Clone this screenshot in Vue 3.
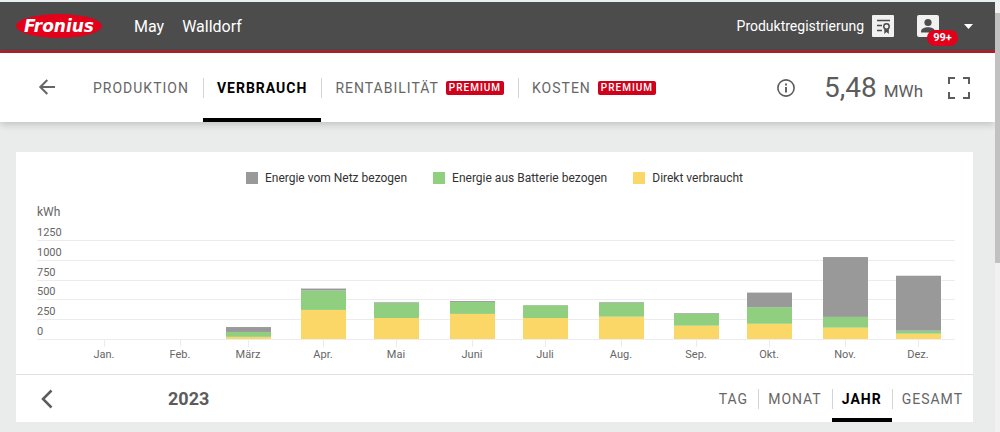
<script setup>
import { ref } from 'vue'

const views = [
  { id: 'production', label: 'PRODUKTION', premium: false },
  { id: 'consumption', label: 'VERBRAUCH', premium: false },
  { id: 'earnings', label: 'RENTABILITÄT', premium: true },
  { id: 'costs', label: 'KOSTEN', premium: true },
]
const activeView = ref('consumption')

const ranges = ['TAG', 'MONAT', 'JAHR', 'GESAMT']
const activeRange = ref('JAHR')

const legend = [
  { key: 'grid', label: 'Energie vom Netz bezogen' },
  { key: 'battery', label: 'Energie aus Batterie bezogen' },
  { key: 'direct', label: 'Direkt verbraucht' },
]

// Values in kWh; "day" is the day of the year on which the month starts.
const months = [
  { label: 'Jan.', day: 0, direct: 0, battery: 0, grid: 0 },
  { label: 'Feb.', day: 31, direct: 0, battery: 0, grid: 0 },
  { label: 'März', day: 59, direct: 27, battery: 62, grid: 62 },
  { label: 'Apr.', day: 90, direct: 367, battery: 245, grid: 25 },
  { label: 'Mai', day: 120, direct: 265, battery: 194, grid: 7 },
  { label: 'Juni', day: 151, direct: 317, battery: 150, grid: 12 },
  { label: 'Juli', day: 181, direct: 265, battery: 160, grid: 4 },
  { label: 'Aug.', day: 212, direct: 282, battery: 176, grid: 8 },
  { label: 'Sep.', day: 243, direct: 168, battery: 152, grid: 8 },
  { label: 'Okt.', day: 273, direct: 192, battery: 210, grid: 184 },
  { label: 'Nov.', day: 304, direct: 143, battery: 136, grid: 756 },
  { label: 'Dez.', day: 334, direct: 67, battery: 38, grid: 694 },
]

const baseY = 139
const barWidth = 45
const scale = 99 / 1250
const yOf = (kwh) => baseY - kwh * scale
const levels = [1250, 1000, 750, 500, 250, 0]

const columns = months.map((m) => {
  const x = Math.round(67 + m.day * 2.437)
  let sum = 0
  const parts = ['direct', 'battery', 'grid'].map((key) => {
    sum += m[key]
    return { key, y: yOf(sum), height: m[key] * scale }
  })
  return { label: m.label, x, parts }
})
</script>

<template>
  <div class="shell">
    <div class="page">
      <header class="topbar">
        <a class="logo" href="#" aria-label="Fronius">
          <svg width="88" height="26" viewBox="0 0 88 26">
            <ellipse cx="44" cy="13" rx="43" ry="12" fill="#e2001a" />
            <text x="44" y="19" text-anchor="middle" class="logo-text">Fronius</text>
          </svg>
        </a>
        <span class="system">May</span>
        <span class="system">Walldorf</span>
        <a class="register" href="#">
          Produktregistrierung
          <svg width="22" height="22" viewBox="0 0 22 22">
            <rect width="22" height="22" rx="1" fill="#f1f1f1" />
            <path d="M5 5.500H18M5 10.500H10M5 15.500H10" stroke="#4c4c4c" stroke-width="1.400" />
            <circle cx="14.500" cy="11.500" r="2.700" fill="none" stroke="#4c4c4c" stroke-width="1.500" />
            <path d="M12.300 13.500V19L14.500 17L16.800 19V13.500L14.500 15Z" fill="#4c4c4c" />
          </svg>
        </a>
        <button class="account" type="button" aria-label="Konto, 99+ Meldungen">
          <span class="avatar">
            <svg width="22" height="22" viewBox="0 0 22 22">
              <rect width="22" height="22" rx="2" fill="#f1f1f1" />
              <circle cx="11" cy="7.500" r="3.600" fill="#4c4c4c" />
              <path d="M4 17.500V16.500C4 13.500 8 12.300 11 12.300S18 13.500 18 16.500V17.500Z" fill="#4c4c4c" />
            </svg>
            <span class="count">99+</span>
          </span>
          <svg width="9" height="5" viewBox="0 0 9 5"><path d="M0 0H9L4.500 5Z" fill="#fff" /></svg>
        </button>
      </header>

      <nav class="subbar">
        <button class="back" type="button" aria-label="Zurück">
          <svg width="18" height="18" viewBox="0 0 18 18">
            <path d="M17 8H2.500M9.300 1L2.300 8L9.300 15" fill="none" stroke="#666" stroke-width="2" />
          </svg>
        </button>
        <div class="tabs views">
          <button
            v-for="v in views"
            :key="v.id"
            type="button"
            class="tab"
            :class="{ active: v.id === activeView }"
            @click="activeView = v.id"
          >
            {{ v.label }}<span v-if="v.premium" class="premium">PREMIUM</span>
          </button>
        </div>
        <button class="icon info" type="button" aria-label="Information">
          <svg width="18" height="18" viewBox="0 0 18 18">
            <circle cx="9" cy="9" r="8.100" fill="none" stroke="#5c5c5c" stroke-width="1.600" />
            <path d="M9 8V13.500M9 4.500V6.500" stroke="#5c5c5c" stroke-width="1.900" />
          </svg>
        </button>
        <div class="total">5,48 <span class="unit">MWh</span></div>
        <button class="icon full" type="button" aria-label="Vollbild">
          <svg width="24" height="24" viewBox="0 0 24 24">
            <path d="M2 8V2H8M16 2H22V8M22 16V22H16M8 22H2V16" fill="none" stroke="#5c5c5c" stroke-width="2" />
          </svg>
        </button>
      </nav>

      <main class="card">
        <ul class="legend">
          <li v-for="l in legend" :key="l.key"><i :class="l.key"></i>{{ l.label }}</li>
        </ul>

        <svg class="chart" viewBox="0 0 918 174" role="img" aria-label="Verbrauch in kWh pro Monat">
          <text x="0" y="16" class="axis-title">kWh</text>
          <g v-for="l in levels" :key="l">
            <rect x="0" :y="Math.round(yOf(l))" width="918" height="1" class="line" />
            <text x="0" :y="Math.round(yOf(l)) - 4" class="label">{{ l }}</text>
          </g>
          <g v-for="c in columns" :key="c.label">
            <rect :x="c.x" :y="baseY" width="1" height="8" class="line" />
            <rect
              v-for="p in c.parts"
              :key="p.key"
              :x="c.x - 22"
              :y="p.y"
              :width="barWidth"
              :height="p.height"
              :class="p.key"
            />
            <text :x="c.x" y="158" text-anchor="middle" class="label">{{ c.label }}</text>
          </g>
        </svg>

        <footer class="period">
          <button class="prev" type="button" aria-label="Vorheriges Jahr">
            <svg width="12" height="20" viewBox="0 0 12 20">
              <path d="M10.500 1.500L2 10L10.500 18.500" fill="none" stroke="#5c5c5c" stroke-width="2.500" />
            </svg>
          </button>
          <strong class="year">2023</strong>
          <div class="tabs ranges">
            <button
              v-for="r in ranges"
              :key="r"
              type="button"
              class="tab"
              :class="{ active: r === activeRange }"
              @click="activeRange = r"
            >
              {{ r }}
            </button>
          </div>
        </footer>
      </main>
    </div>
    <div class="scrollbar" aria-hidden="true"><div class="thumb"></div></div>
  </div>
</template>

<style>
body {
  background: #eaeceb;
}
</style>

<style scoped>
.shell {
  display: grid;
  grid-template-columns: minmax(0, 1fr) 5px;
  min-height: 100vh;
  box-sizing: border-box;
  border-top: 2px solid #e9eef0;
  background: #eaeceb;
  font-family: Roboto, "Liberation Sans", sans-serif;
  color: #5c5c5c;
}
button {
  border: 0;
  padding: 0;
  background: none;
  font: inherit;
  color: inherit;
  cursor: pointer;
}
svg {
  display: block;
}
.topbar {
  display: flex;
  align-items: center;
  height: 48px;
  padding: 0 22px 0 15px;
  border-bottom: 3px solid #a82432;
  background: #4c4c4c;
  color: #fff;
  font-size: 16px;
}
.logo {
  margin-right: 31px;
}
.logo-text {
  font: italic bold 17px "DejaVu Sans", sans-serif;
  fill: #fff;
}
.system {
  margin-right: 18px;
}
.register {
  display: flex;
  align-items: center;
  gap: 8px;
  margin-left: auto;
  color: #fff;
  font-size: 14px;
  text-decoration: none;
}
.account {
  display: flex;
  align-items: center;
  gap: 25px;
  margin-left: 23px;
}
.avatar {
  position: relative;
}
.count {
  position: absolute;
  left: 10px;
  top: 15px;
  width: 31px;
  border-radius: 8px;
  background: #e2001a;
  color: #fff;
  font-size: 11px;
  font-weight: 700;
  line-height: 16px;
  text-align: center;
}
.subbar {
  display: flex;
  align-items: center;
  height: 69px;
  padding: 0 24px 0 38px;
  background: #fff;
  box-shadow: 0 2px 8px rgba(0, 0, 0, 0.2);
}
.back {
  margin-right: 23px;
}
.tabs {
  display: flex;
  align-self: stretch;
}
.tab {
  position: relative;
  display: flex;
  align-items: center;
  padding: 0 14px;
  color: #666;
  font-size: 14px;
  letter-spacing: 1px;
}
.tab + .tab::before {
  content: "";
  position: absolute;
  left: 0;
  top: 50%;
  height: 20px;
  margin-top: -10px;
  border-left: 1px solid #d4d4d4;
}
.tab.active {
  color: #000;
  font-weight: 700;
}
.tab.active::after {
  content: "";
  position: absolute;
  left: 0;
  right: 0;
  bottom: 0;
  height: 4px;
  background: #000;
}
.premium {
  margin-left: 7px;
  padding: 0 3px;
  border-radius: 2px;
  background: #d0021b;
  color: #fff;
  font-size: 10px;
  font-weight: 500;
  line-height: 14px;
}
.info {
  margin-left: auto;
  margin-right: 29px;
}
.total {
  margin-right: 24px;
  font-size: 28px;
}
.unit {
  font-size: 17px;
}
.card {
  margin: 30px 22px 10px 16px;
  background: #fff;
}
.legend {
  display: flex;
  justify-content: center;
  gap: 26px;
  margin: 0;
  padding: 16px 0 0;
  list-style: none;
  color: #333;
  font-size: 12px;
  line-height: 20px;
}
.legend li {
  display: flex;
  align-items: center;
  gap: 7px;
}
.legend i {
  width: 12px;
  height: 12px;
}
.legend .grid {
  background: #999;
}
.legend .battery {
  background: #91cf80;
}
.legend .direct {
  background: #fad766;
}
.chart {
  width: calc(100% - 39px);
  margin: 12px 18px 0 21px;
}
.chart .grid {
  fill: #999;
}
.chart .battery {
  fill: #91cf80;
}
.chart .direct {
  fill: #fad766;
}
.line {
  fill: #ececec;
}
.label {
  font-size: 11px;
  fill: #666;
}
.axis-title {
  font-size: 12px;
  fill: #666;
}
.period {
  display: flex;
  align-items: center;
  height: 47px;
  padding-left: 25px;
  border-top: 1px solid #e0e0e0;
}
.year {
  margin-left: 115px;
  font-size: 18px;
}
.ranges {
  margin-left: auto;
}
.ranges .tab {
  padding: 0 10px;
}
.scrollbar {
  background: #f1f1f1;
}
.thumb {
  height: 250px;
  margin-top: 11px;
  background: #c1c1c1;
}
</style>
